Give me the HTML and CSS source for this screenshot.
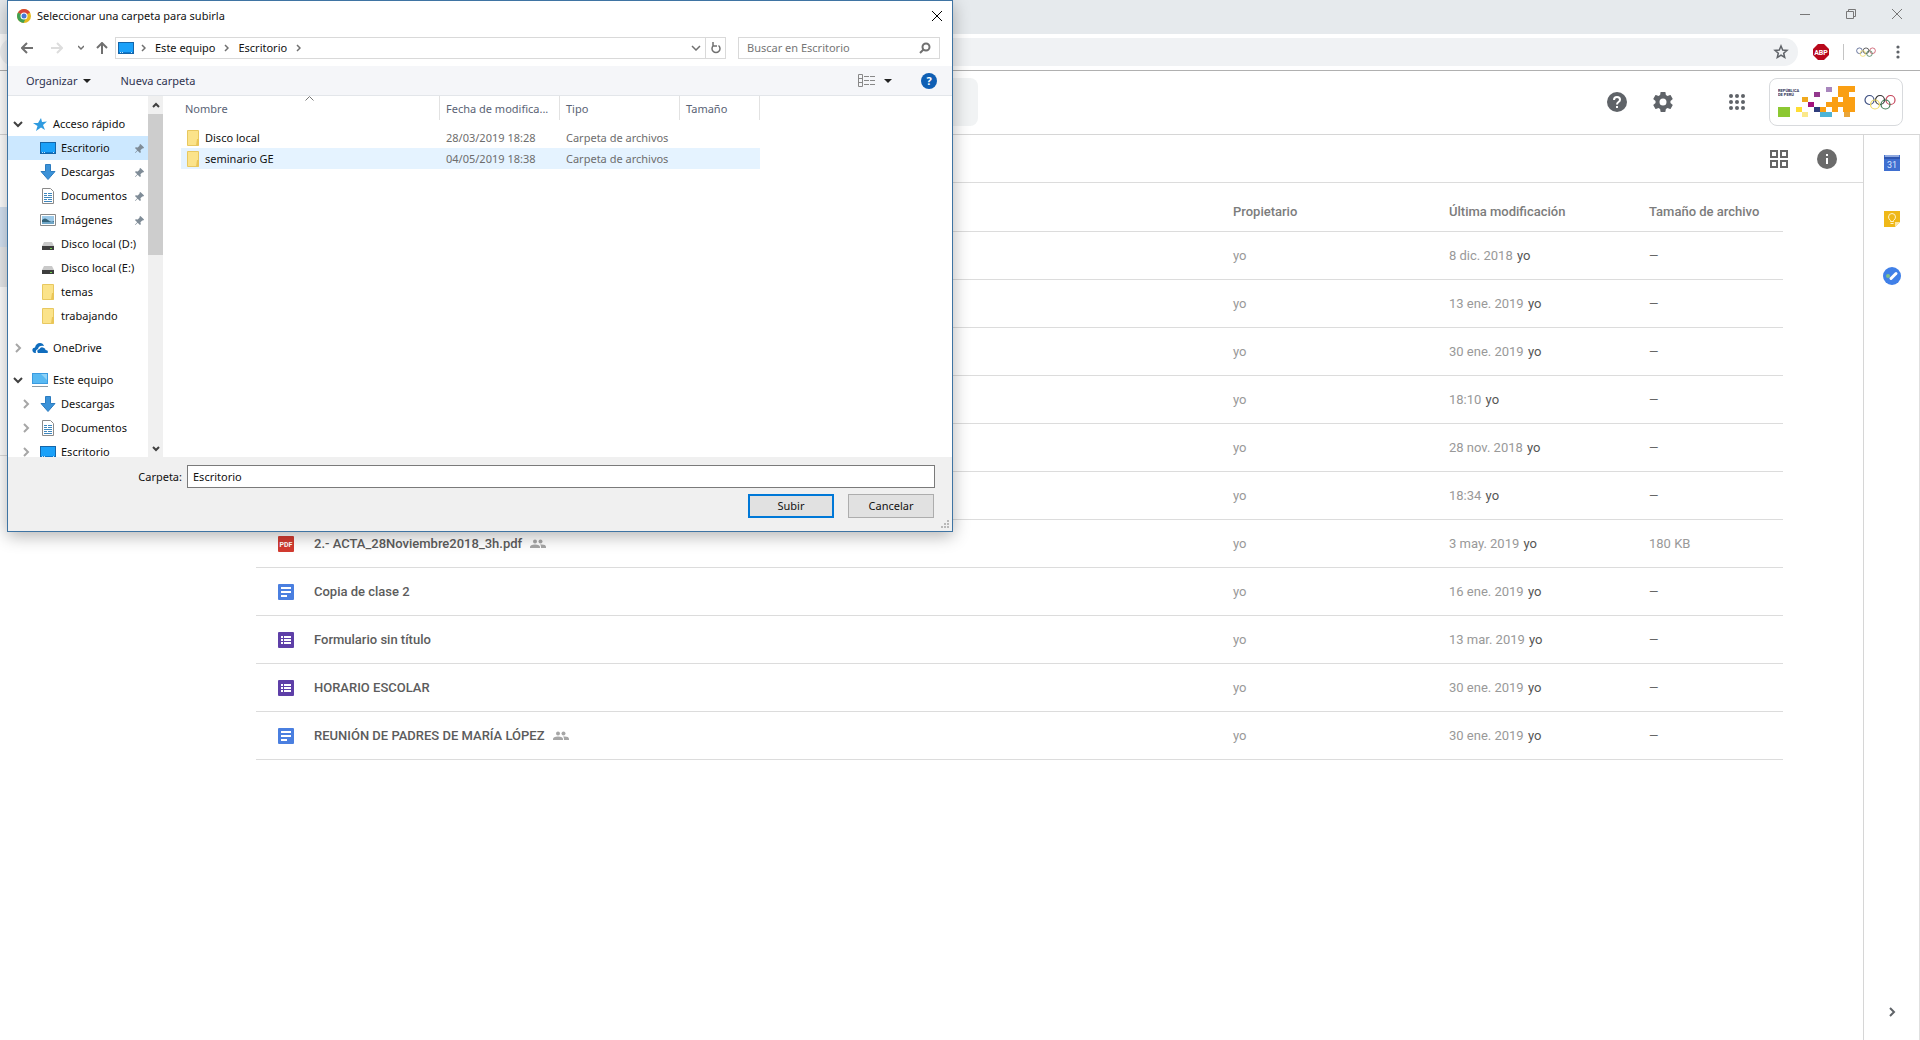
FILE: index.html
```html
<!DOCTYPE html>
<html lang="es">
  <head>
    <meta charset="utf-8" />
    <title>Mi unidad - Google Drive</title>
    <link rel="stylesheet" href="styles.css" />
  </head>
  <body>
    <!-- shared icons -->
    <svg class="sprite" aria-hidden="true">
      <symbol id="desktop" viewBox="0 0 16 16">
        <path fill="#1565a8" d="M0 2h16v12H0z" />
        <path fill="#1ba1f9" d="M1 3h14v9H1z" />
        <path fill="#0b79d0" d="M1 12h14v1H1z" />
        <path fill="#bfe4fb" d="M2 12h1v1H2zM4 12h1v1H4zM13 12h1v1h-1z" />
      </symbol>
      <symbol id="download" viewBox="0 0 16 16">
        <path fill="#3b92d8" stroke="#2c7cc0" d="M5.500.5h5v7h4.500L8 15.500 1 7.500h4.500z" />
      </symbol>
      <symbol id="doc" viewBox="0 0 16 16">
        <path fill="#fff" stroke="#8a8a8a" d="M2.500.5h8l3 3v12h-11z" />
        <path stroke="#3f87bd" d="M4 5.500h3M8 5.500h4M4 7.500h3M8 7.500h4M4 9.500h8M4 11.500h3M8 11.500h4M4 13.500h8" />
      </symbol>
      <symbol id="picture" viewBox="0 0 16 16">
        <path fill="#fff" stroke="#8a8a8a" d="M.5 2.500h15v11H.5z" />
        <path fill="#9cc9e8" d="M2 4h12v8H2z" />
        <path fill="#33637a" d="M2 8q3-3 6 0t6 1v3H2z" />
        <path fill="#6fa6c7" d="M2 10h12v2H2z" />
      </symbol>
      <symbol id="drive" viewBox="0 0 16 16">
        <path fill="#c9c9c9" d="M4 6h8l2 4H2z" />
        <path fill="#3d3d3d" d="M2 10h12v4H2z" />
        <path fill="#6fd04c" d="M10 12h2v1h-2z" />
      </symbol>
      <symbol id="folder" viewBox="0 0 16 16">
        <path fill="#fbe38a" stroke="#e8c860" d="M2.500.5h11v15h-11z" />
        <path fill="#e9c557" d="M12 9h2v6.500h-3z" />
      </symbol>
      <symbol id="star" viewBox="0 0 16 16">
        <path fill="#2f9be0" d="M9 2l1 4 5-.5-4 3.500 2 5-4-2.500L4 15l1.500-5L1 7h5z" />
      </symbol>
      <symbol id="cloud" viewBox="0 0 16 16">
        <path fill="#0f6cbd" d="M1 12Q-1 8 3 7.500 4 3 8 3q3 0 4 3-5-1-6 3-3 1-2 4H3q-1 0-2-1z" />
        <path fill="#0f6cbd" d="M6 13q-2-3 1.500-4Q9 6 12 8q1.500.5 1.500 2 2.500 0 2.500 2 0 1-1 1z" />
      </symbol>
      <symbol id="pc" viewBox="0 0 16 16">
        <path fill="#3a9be0" d="M0 1h16v11H0z" />
        <path fill="#58b9f2" d="M1 2h14v9H1z" />
        <path fill="#8fd3f8" d="M9 2h6v6z" />
        <path fill="#8c9aa3" d="M0 14h16v1H0z" />
      </symbol>
      <symbol id="pin" viewBox="0 0 12 12">
        <path fill="#7f8c97" d="M7 1l4 4-1 1H9L7 8l.5 2-1 1L4 8.500 1.500 11 1 10.500 3.500 8 1 5.500l1-1L4 5l2-2V2z" />
      </symbol>
      <symbol id="open" viewBox="0 0 10 10">
        <path fill="none" stroke="#404040" stroke-width="2" d="M1 3l4 4 4-4" />
      </symbol>
      <symbol id="closed" viewBox="0 0 10 10">
        <path fill="none" stroke="#a6a6a6" stroke-width="2" d="M3 1l4 4-4 4" />
      </symbol>
      <symbol id="people" viewBox="0 0 16 10">
        <circle cx="5" cy="2.500" r="2" />
        <circle cx="10.500" cy="2.500" r="2" />
        <path d="M0 9V8q0-2.500 5-2.500T10 8v1zM11 9V8q0-1.500-1-2.400 6-.5 6 2.400v1z" />
      </symbol>
      <symbol id="gdoc" viewBox="0 0 16 16">
        <rect width="16" height="16" rx="1" fill="#4a7fe0" />
        <path fill="#fff" d="M3 3h10v2H3zM3 7h10v2H3zM3 11h6v2H3z" />
      </symbol>
      <symbol id="gform" viewBox="0 0 16 16">
        <rect width="16" height="16" rx="1" fill="#5e3fa8" />
        <path fill="#fff" d="M3 4h2v2H3zM6 4h7v2H6zM3 7h2v2H3zM6 7h7v2H6zM3 10h2v2H3zM6 10h7v2H6z" />
      </symbol>
      <symbol id="rings" viewBox="0 0 32 16">
        <g fill="none" stroke-width="1.200">
          <circle cx="5.500" cy="6" r="4.500" stroke="#3d4f80" />
          <circle cx="16" cy="6" r="4.500" stroke="#333" />
          <circle cx="26.500" cy="6" r="4.500" stroke="#c5455a" />
          <circle cx="11" cy="10.500" r="4.500" stroke="#eedb62" />
          <circle cx="21.500" cy="10.500" r="4.500" stroke="#3d7a52" />
        </g>
      </symbol>
    </svg>

    <div class="browser">
      <div class="tabstrip">
        <button aria-label="Minimizar"><svg width="10" height="10"><path d="M0 5.500h10" /></svg></button>
        <button aria-label="Restaurar"><svg width="10" height="10"><path d="M.5 2.500h7v7h-7zM2.500 2.500v-2h7v7h-2" /></svg></button>
        <button aria-label="Cerrar ventana"><svg width="10" height="10"><path d="M0 0l10 10M10 0L0 10" /></svg></button>
      </div>

      <div class="toolbar">
        <div class="omnibox">
          <svg width="16" height="16" viewBox="0 0 16 16"><path fill="none" stroke="#5f6368" stroke-width="1.500" d="M8 2l1.700 4 4.300.4-3.300 2.800 1 4.300L8 11.200l-3.700 2.300 1-4.300L2 6.400 6.300 6z" /></svg>
        </div>
        <svg class="abp" width="16" height="16" viewBox="0 0 16 16">
          <path fill="#b8081b" d="M5 0h6l5 5v6l-5 5H5l-5-5V5z" />
          <text x="8" y="11" fill="#fff" font-family="Roboto" font-size="7" font-weight="700" text-anchor="middle">ABP</text>
        </svg>
        <span class="divider"></span>
        <svg class="profile" width="20" height="10"><use href="#rings" /></svg>
        <svg width="4" height="14" fill="#5f6368"><circle cx="2" cy="2" r="1.600" /><circle cx="2" cy="7" r="1.600" /><circle cx="2" cy="12" r="1.600" /></svg>
      </div>

      <header class="header">
        <div class="searchbox"></div>
        <button aria-label="Ayuda">
          <svg width="20" height="20" viewBox="0 0 20 20"><circle cx="10" cy="10" r="10" fill="#5f6368" /><path fill="none" stroke="#fff" stroke-width="2" d="M7 8q0-3 3-3t3 2.700q0 1.300-1.500 2.300T10 12.500" /><path fill="#fff" d="M9 14h2v2H9z" /></svg>
        </button>
        <button class="settings" aria-label="Configuración">
          <svg width="20" height="20" viewBox="2 2 20 20"><path fill="#5f6368" d="M19.430 12.980c.04-.32.07-.64.07-.98s-.03-.66-.07-.98l2.110-1.650c.19-.15.24-.42.12-.64l-2-3.460c-.12-.22-.39-.3-.61-.22l-2.490 1c-.52-.4-1.080-.73-1.690-.98l-.38-2.650C14.460 2.180 14.250 2 14 2h-4c-.25 0-.46.18-.49.42l-.38 2.650c-.61.25-1.170.59-1.690.98l-2.490-1c-.23-.09-.49 0-.61.22l-2 3.460c-.13.22-.07.49.12.64l2.110 1.650c-.04.32-.07.65-.07.98s.03.66.07.98l-2.110 1.650c-.19.15-.24.42-.12.64l2 3.460c.12.22.39.3.61.22l2.490-1c.52.4 1.080.73 1.690.98l.38 2.650c.03.24.24.42.49.42h4c.25 0 .46-.18.49-.42l.38-2.650c.61-.25 1.170-.59 1.690-.98l2.490 1c.23.09.49 0 .61-.22l2-3.460c.12-.22.07-.49-.12-.64l-2.110-1.650zM12 15.500a3.500 3.500 0 1 1 0-7 3.500 3.500 0 0 1 0 7z" /></svg>
        </button>
        <button class="apps" aria-label="Aplicaciones">
          <svg width="16" height="16" fill="#5f6368"><circle cx="2" cy="2" r="2" /><circle cx="8" cy="2" r="2" /><circle cx="14" cy="2" r="2" /><circle cx="2" cy="8" r="2" /><circle cx="8" cy="8" r="2" /><circle cx="14" cy="8" r="2" /><circle cx="2" cy="14" r="2" /><circle cx="8" cy="14" r="2" /><circle cx="14" cy="14" r="2" /></svg>
        </button>
        <button class="account" aria-label="Cuenta">
          <svg width="78" height="34" viewBox="0 0 78 34">
            <g font-family="Roboto" font-size="4" font-weight="700" fill="#2b2f55">
              <text x="0" y="7">REPÚBLICA</text>
              <text x="0" y="11">DE PERÚ</text>
            </g>
            <path fill="#8cc832" d="M0 22h12v10H0z" />
            <path fill="#fd3" d="M18 22h6v5h-6z" />
            <path fill="#fbe88a" d="M24 27h6v5h-6z" />
            <path fill="#f0a91e" d="M24 12h6v5h-6z" />
            <path fill="#a3117c" d="M30 17h6v5h-6z" />
            <path fill="#93388d" d="M36 7h6v5h-6z" />
            <path fill="#2f3d7c" d="M36 22h6v5h-6z" />
            <path fill="#a886bd" d="M48 2h6v5h-6z" />
            <path fill="#4db4d6" d="M42 27h12v5H42z" />
            <path fill="#e8a53a" d="M66 27h6v5h-6z" />
            <path fill="#fa9f13" fill-rule="evenodd" d="M60 1h17v6h-6v5h6v15h-12v-5h-5v5h-6v-5h-6v5h-6v-5h6v-5h6v-5h6V7h0zM60 12v5h5v-5z" />
          </svg>
          <svg width="32" height="16"><use href="#rings" /></svg>
        </button>
      </header>

      <div class="content">
        <nav class="leftnav">
          <div class="nav-item selected"></div>
          <div class="nav-item hovered"></div>
          <div class="storage"></div>
        </nav>
        <main>
          <div class="actions">
            <button aria-label="Vista de cuadrícula"><svg width="18" height="18" fill="none" stroke="#666" stroke-width="2"><path d="M1 1h6v6H1zM11 1h6v6h-6zM1 11h6v6H1zM11 11h6v6h-6z" /></svg></button>
            <button aria-label="Ver detalles"><svg width="20" height="20"><circle cx="10" cy="10" r="10" fill="#6b6b6b" /><path fill="#fff" d="M9 5h2v2H9zM9 9h2v6H9z" /></svg></button>
          </div>
          <table class="files">
            <thead>
              <tr><th class="name"></th><th class="owner">Propietario</th><th class="date">Última modificación</th><th class="size">Tamaño de archivo</th></tr>
            </thead>
            <tbody>
              <tr><td></td><td>yo</td><td>8 dic. 2018 <b>yo</b></td><td class="none">—</td></tr>
              <tr><td></td><td>yo</td><td>13 ene. 2019 <b>yo</b></td><td class="none">—</td></tr>
              <tr><td></td><td>yo</td><td>30 ene. 2019 <b>yo</b></td><td class="none">—</td></tr>
              <tr><td></td><td>yo</td><td>18:10 <b>yo</b></td><td class="none">—</td></tr>
              <tr><td></td><td>yo</td><td>28 nov. 2018 <b>yo</b></td><td class="none">—</td></tr>
              <tr><td></td><td>yo</td><td>18:34 <b>yo</b></td><td class="none">—</td></tr>
              <tr>
                <td>
                  <div class="file">
                    <svg width="16" height="16">
                      <rect width="16" height="16" rx="1" fill="#d33b30" />
                      <text x="8" y="11" fill="#fff" font-family="Roboto" font-size="7" font-weight="700" text-anchor="middle">PDF</text>
                    </svg>
                    <span>2.- ACTA_28Noviembre2018_3h.pdf</span>
                    <svg class="shared" width="16" height="10"><use href="#people" /></svg>
                  </div>
                </td>
                <td>yo</td><td>3 may. 2019 <b>yo</b></td><td>180 KB</td>
              </tr>
              <tr>
                <td><div class="file"><svg width="16" height="16"><use href="#gdoc" /></svg><span>Copia de clase 2</span></div></td>
                <td>yo</td><td>16 ene. 2019 <b>yo</b></td><td class="none">—</td>
              </tr>
              <tr>
                <td><div class="file"><svg width="16" height="16"><use href="#gform" /></svg><span>Formulario sin título</span></div></td>
                <td>yo</td><td>13 mar. 2019 <b>yo</b></td><td class="none">—</td>
              </tr>
              <tr>
                <td><div class="file"><svg width="16" height="16"><use href="#gform" /></svg><span>HORARIO ESCOLAR</span></div></td>
                <td>yo</td><td>30 ene. 2019 <b>yo</b></td><td class="none">—</td>
              </tr>
              <tr>
                <td><div class="file"><svg width="16" height="16"><use href="#gdoc" /></svg><span>REUNIÓN DE PADRES DE MARÍA LÓPEZ</span><svg class="shared" width="16" height="10"><use href="#people" /></svg></div></td>
                <td>yo</td><td>30 ene. 2019 <b>yo</b></td><td class="none">—</td>
              </tr>
            </tbody>
          </table>
        </main>
        <aside class="addons">
          <button aria-label="Calendar"><svg width="16" height="16"><path fill="#3f6fd0" d="M0 0h16v16H0z" /><path fill="#8fa9e0" d="M1 0h14v2H1z" /><path fill="#2f56b0" d="M0 2h16v2H0z" /><text x="8" y="13" fill="#dbe6ff" font-family="Roboto" font-size="9" text-anchor="middle">31</text></svg></button>
          <button aria-label="Keep"><svg width="16" height="16"><path fill="#efb818" d="M0 0h16v11l-5 5H0z" /><path fill="#fbe6a6" d="M11 16v-5h5z" /><path fill="none" stroke="#fff3cf" d="M6.500 10.500v-1q-2-1.500-2-3.500a3.500 3.500 0 0 1 7 0q0 2-2 3.500v1zM6.500 12.500h3" /></svg></button>
          <button aria-label="Tasks"><svg width="18" height="18"><circle cx="9" cy="9" r="9" fill="#4080e8" /><circle cx="5" cy="9" r="2" fill="#7fc08a" /><path stroke="#fff" stroke-width="3" stroke-linecap="round" d="M8 11.500l5-5" /></svg></button>
          <button class="collapse" aria-label="Ocultar panel lateral"><svg width="10" height="12" fill="none" stroke="#5f6368" stroke-width="2"><path d="M3 2l4 4-4 4" /></svg></button>
        </aside>
      </div>
    </div>

    <!-- folder picker -->
    <div class="dialog" role="dialog" aria-label="Seleccionar una carpeta para subirla">
      <div class="titlebar">
        <svg width="14" height="14" viewBox="0 0 14 14">
          <circle cx="7" cy="7" r="7" fill="#e5b91e" />
          <path fill="#d9453a" d="M7 7L1 3.500A7 7 0 0 1 13 3.500z" />
          <path fill="#3f9f55" d="M7 7L1 3.500A7 7 0 0 0 6.500 14L9 9z" />
          <circle cx="7" cy="7" r="3.500" fill="#fff" />
          <circle cx="7" cy="7" r="2.500" fill="#4678d8" />
        </svg>
        <span>Seleccionar una carpeta para subirla</span>
        <button class="close" aria-label="Cerrar"><svg width="10" height="10"><path stroke="#000" d="M0 0l10 10M10 0L0 10" /></svg></button>
      </div>

      <div class="navbar">
        <button aria-label="Atrás"><svg width="12" height="12"><path d="M12 6H1M6 1L1 6l5 5" /></svg></button>
        <button class="off" aria-label="Adelante"><svg width="12" height="12"><path d="M0 6h11M6 1l5 5-5 5" /></svg></button>
        <button class="recent" aria-label="Recientes"><svg width="6" height="6"><path d="M0 1l3 3 3-3" /></svg></button>
        <button class="up" aria-label="Subir un nivel"><svg width="12" height="12"><path d="M6 12V1M1 6l5-5 5 5" /></svg></button>
        <div class="address">
          <svg class="place" width="16" height="14" viewBox="0 1 16 14"><use href="#desktop" width="16" height="16" /></svg>
          <svg width="5" height="8"><path d="M1 1l3 3-3 3" /></svg>
          <button>Este equipo</button>
          <svg width="5" height="8"><path d="M1 1l3 3-3 3" /></svg>
          <button>Escritorio</button>
          <svg width="5" height="8"><path d="M1 1l3 3-3 3" /></svg>
          <button class="history" aria-label="Ubicaciones anteriores"><svg width="10" height="6"><path d="M1 1l4 4 4-4" /></svg></button>
          <button class="refresh" aria-label="Actualizar"><svg width="12" height="12"><path d="M8.500 3.500a4 4 0 1 1-5 0M3 0v4h4" /></svg></button>
        </div>
        <div class="search">
          <input type="text" placeholder="Buscar en Escritorio" aria-label="Buscar en Escritorio" />
          <svg width="12" height="12"><circle cx="7" cy="5" r="3.500" /><path d="M4.500 7.500L1 11" /></svg>
        </div>
      </div>

      <div class="commands">
        <button>Organizar <span class="caret"></span></button>
        <button>Nueva carpeta</button>
        <button class="view" aria-label="Cambiar la vista">
          <svg width="17" height="13" fill="none" stroke="#888"><path d="M.5.5h4v12h-4zM0 4.500h5M0 8.500h5M6 2.500h5M12 2.500h5M6 6.500h5M12 6.500h5M6 10.500h5M12 10.500h5" /></svg>
          <span class="caret"></span>
        </button>
        <button class="help" aria-label="Ayuda">?</button>
      </div>

      <div class="browse">
        <div class="tree">
          <ul>
            <li><svg class="arrow"><use href="#open" /></svg><svg class="icon"><use href="#star" /></svg>Acceso rápido</li>
            <li class="child current"><svg class="icon"><use href="#desktop" /></svg>Escritorio<svg class="pin"><use href="#pin" /></svg></li>
            <li class="child"><svg class="icon"><use href="#download" /></svg>Descargas<svg class="pin"><use href="#pin" /></svg></li>
            <li class="child"><svg class="icon"><use href="#doc" /></svg>Documentos<svg class="pin"><use href="#pin" /></svg></li>
            <li class="child"><svg class="icon"><use href="#picture" /></svg>Imágenes<svg class="pin"><use href="#pin" /></svg></li>
            <li class="child"><svg class="icon"><use href="#drive" /></svg>Disco local (D:)</li>
            <li class="child"><svg class="icon"><use href="#drive" /></svg>Disco local (E:)</li>
            <li class="child"><svg class="icon"><use href="#folder" /></svg>temas</li>
            <li class="child"><svg class="icon"><use href="#folder" /></svg>trabajando</li>
          </ul>
          <ul>
            <li><svg class="arrow"><use href="#closed" /></svg><svg class="icon"><use href="#cloud" /></svg>OneDrive</li>
          </ul>
          <ul>
            <li><svg class="arrow"><use href="#open" /></svg><svg class="icon"><use href="#pc" /></svg>Este equipo</li>
            <li class="nested"><svg class="arrow"><use href="#closed" /></svg><svg class="icon"><use href="#download" /></svg>Descargas</li>
            <li class="nested"><svg class="arrow"><use href="#closed" /></svg><svg class="icon"><use href="#doc" /></svg>Documentos</li>
            <li class="nested"><svg class="arrow"><use href="#closed" /></svg><svg class="icon"><use href="#desktop" /></svg>Escritorio</li>
          </ul>
        </div>
        <div class="scrollbar">
          <svg width="10" height="18"><path d="M2 11l3-3 3 3" /></svg>
          <div class="thumb"></div>
          <svg width="10" height="18"><path d="M2 8l3 3 3-3" /></svg>
        </div>
        <div class="listing">
          <svg class="sort" width="9" height="5"><path fill="none" stroke="#777" d="M.5 4.500l4-4 4 4" /></svg>
          <table>
            <thead>
              <tr><th class="col-name">Nombre</th><th class="col-date">Fecha de modifica...</th><th class="col-type">Tipo</th><th class="col-size">Tamaño</th></tr>
            </thead>
            <tbody>
              <tr><td><div class="folder"><svg width="16" height="16"><use href="#folder" /></svg>Disco local</div></td><td>28/03/2019 18:28</td><td>Carpeta de archivos</td><td></td></tr>
              <tr class="hot"><td><div class="folder"><svg width="16" height="16"><use href="#folder" /></svg>seminario GE</div></td><td>04/05/2019 18:38</td><td>Carpeta de archivos</td><td></td></tr>
            </tbody>
          </table>
        </div>
      </div>

      <div class="footer">
        <div class="field">
          <label for="folder">Carpeta:</label>
          <input id="folder" type="text" value="Escritorio" />
        </div>
        <div class="buttons">
          <button class="primary">Subir</button>
          <button>Cancelar</button>
        </div>
        <svg class="grip" width="9" height="9" fill="#b8b8b8"><path d="M6 0h2v2H6zM3 3h2v2H3zM6 3h2v2H6zM0 6h2v2H0zM3 6h2v2H3zM6 6h2v2H6z" /></svg>
      </div>
    </div>
  </body>
</html>
```

FILE: styles.css
```css
* {
  box-sizing: border-box;
}

body {
  margin: 0;
  background: #fff;
  font-family: "Roboto", sans-serif;
  font-size: 13px;
  color: #555;
}

button {
  display: flex;
  align-items: center;
  padding: 0;
  border: none;
  background: none;
  font: inherit;
  color: inherit;
}

svg {
  display: block;
  flex: none;
}

ul {
  list-style: none;
  margin: 0;
  padding: 0;
}

table {
  border-spacing: 0;
  table-layout: fixed;
}

th {
  text-align: left;
}

.sprite {
  display: none;
}

/* browser window */

.browser {
  display: flex;
  flex-direction: column;
  height: 100vh;
}

.tabstrip {
  display: flex;
  justify-content: flex-end;
  gap: 36px;
  height: 34px;
  padding: 0 18px 6px;
  background: #e6eaed;
}

.tabstrip path {
  fill: none;
  stroke: #777;
}

.toolbar {
  display: flex;
  align-items: center;
  height: 37px;
  padding: 0 20px 0 0;
  border-bottom: 1px solid #b0b0b0;
}

.omnibox {
  display: flex;
  flex: 1;
  align-items: center;
  justify-content: flex-end;
  height: 28px;
  padding-right: 9px;
  border-radius: 14px;
  background: #f0f2f4;
}

.abp {
  margin-left: 15px;
}

.divider {
  width: 1px;
  height: 16px;
  margin: 0 12px 0 14px;
  background: #c4c4c4;
}

.profile {
  margin-right: 20px;
}

.header {
  display: flex;
  align-items: center;
  height: 64px;
  padding: 0 17px 2px 0;
  border-bottom: 1px solid #d6d6d6;
}

.searchbox {
  width: 722px;
  height: 48px;
  margin: 0 auto 0 256px;
  border-radius: 8px;
  background: #f1f3f4;
}

.settings {
  margin-left: 26px;
}

.apps {
  margin: 0 24px 0 56px;
}

.account {
  gap: 8px;
  height: 48px;
  padding: 0 6px 0 8px;
  border: 1px solid #d8dadd;
  border-radius: 8px;
}

.content {
  display: flex;
  flex: 1;
}

.leftnav {
  width: 256px;
  padding-top: 72px;
}

.nav-item {
  height: 40px;
}

.nav-item.selected {
  background: #d5e3f3;
}

.nav-item.hovered {
  background: #e8eaec;
}

.storage {
  margin-top: 168px;
  border-top: 1px solid #ddd;
}

main {
  flex: 1;
}

.actions {
  display: flex;
  align-items: center;
  justify-content: flex-end;
  gap: 29px;
  height: 48px;
  padding-right: 26px;
  border-bottom: 1px solid #dcdcdc;
}

.files {
  width: calc(100% - 80px);
}

.files th,
.files td {
  height: 48px;
  padding: 0;
  border-bottom: 1px solid #dcdcdc;
}

.files th {
  height: 49px;
  padding-top: 9px;
  font-weight: 500;
  color: #7c7c7c;
}

.files td {
  color: #999;
}

.files b {
  margin-left: 1px;
  font-weight: 400;
  color: #555;
}

.files .none {
  font-size: 12px;
  color: #666;
}

.owner {
  width: 216px;
}

.date {
  width: 200px;
}

.size {
  width: 134px;
}

.file {
  display: flex;
  align-items: center;
  padding-left: 22px;
  font-weight: 500;
  color: #5c5c5c;
}

.file span {
  margin: 0 8px 0 20px;
}

.shared {
  fill: #a6a6a6;
}

.addons {
  display: flex;
  flex-direction: column;
  align-items: center;
  gap: 40px;
  width: 57px;
  padding: 20px 0 22px;
  border-left: 1px solid #d6d6d6;
  border-right: 1px solid #e0e0e0;
}

.collapse {
  margin-top: auto;
}

/* folder picker */

.dialog {
  position: absolute;
  top: 0;
  left: 7px;
  width: 946px;
  border: 1px solid #3f74a3;
  background: #fff;
  box-shadow: 0 4px 16px rgba(0, 0, 0, 0.3);
  font-family: "Noto Sans", sans-serif;
  font-size: 11px;
  line-height: 16px;
  color: #111;
}

.titlebar {
  display: flex;
  align-items: center;
  gap: 6px;
  height: 29px;
  padding: 0 10px 0 9px;
}

.close {
  margin-left: auto;
}

.navbar {
  display: flex;
  align-items: center;
  height: 36px;
  padding: 0 12px 0 13px;
}

.navbar path,
.navbar circle {
  fill: none;
  stroke: #707070;
  stroke-width: 2;
}

.navbar .off {
  margin-left: 18px;
}

.navbar .off path {
  stroke: #ddd;
}

.navbar .recent {
  margin: 0 12px 0 15px;
}

.navbar .recent path,
.address path {
  stroke-width: 1.5;
}

.address {
  display: flex;
  flex: 1;
  align-items: center;
  height: 22px;
  margin: 0 12px 0 7px;
  padding-left: 2px;
  border: 1px solid #d9d9d9;
}

.address button {
  margin: 0 9px;
}

.address .place {
  margin-right: 7px;
}

.address .history {
  margin: 0 4px 0 auto;
}

.address .refresh {
  height: 100%;
  margin: 0;
  padding: 0 3px 0 4px;
  border-left: 1px solid #d9d9d9;
}

.search {
  display: flex;
  align-items: center;
  width: 202px;
  height: 22px;
  padding: 0 8px;
  border: 1px solid #d9d9d9;
}

.search input {
  flex: 1;
  min-width: 0;
  padding: 0;
  border: none;
  font: inherit;
}

.search input::placeholder {
  color: #767676;
}

.commands {
  display: flex;
  align-items: center;
  height: 30px;
  padding: 0 15px 0 18px;
  border-bottom: 1px solid #e3e6ea;
  background: #f5f6f9;
  color: #2f3350;
}

.commands button {
  margin-right: 29px;
}

.caret {
  margin-left: 6px;
  border: 4px solid transparent;
  border-top-color: #222;
  border-bottom: none;
}

.commands .view {
  margin: 0 29px 0 auto;
}

.view .caret {
  margin-left: 9px;
}

.commands .help {
  justify-content: center;
  width: 16px;
  height: 16px;
  margin: 0;
  border-radius: 50%;
  background: #0f5fb4;
  color: #fff;
  font-weight: 700;
}

.browse {
  display: flex;
  height: 361px;
}

.tree {
  width: 140px;
  padding-top: 16px;
  overflow: hidden;
}

.tree ul {
  margin-bottom: 8px;
}

.tree li {
  display: flex;
  align-items: center;
  height: 24px;
  padding-left: 5px;
  white-space: nowrap;
}

.tree .child {
  padding-left: 32px;
}

.tree .nested {
  padding-left: 13px;
}

.tree .current {
  background: #cce8ff;
}

.arrow {
  width: 10px;
  height: 10px;
  margin-right: 9px;
}

.icon {
  width: 16px;
  height: 16px;
  margin-right: 5px;
}

.pin {
  width: 11px;
  height: 11px;
  margin: 0 3px 0 auto;
}

.scrollbar {
  display: flex;
  flex-direction: column;
  align-items: center;
  width: 15px;
  background: #f0f0f0;
}

.scrollbar path {
  fill: none;
  stroke: #404040;
  stroke-width: 2;
}

.thumb {
  width: 100%;
  height: 141px;
  margin-bottom: auto;
  background: #cdcdcd;
}

.listing {
  position: relative;
  flex: 1;
  padding-left: 18px;
}

.sort {
  position: absolute;
  top: 0;
  left: 142px;
}

.listing table {
  width: 579px;
}

.listing th {
  height: 24px;
  padding: 2px 0 0 6px;
  border-right: 1px solid #e2e2e2;
  font-weight: 400;
  color: #5a6375;
  white-space: nowrap;
}

.listing td {
  height: 21px;
  padding: 0 0 0 6px;
  color: #6d6d6d;
}

.listing .col-name,
.listing td:first-child {
  padding-left: 4px;
}

.listing tbody::before {
  display: block;
  height: 7px;
  content: "";
}

.listing .hot {
  background: #e5f3ff;
}

.col-date,
.col-type {
  width: 120px;
}

.col-size {
  width: 80px;
}

.folder {
  display: flex;
  align-items: center;
  gap: 4px;
  color: #111;
}

.footer {
  position: relative;
  padding: 8px 17px 13px 0;
  background: #f0f0f0;
}

.field {
  display: flex;
  align-items: center;
}

.field label {
  width: 174px;
  margin-right: 5px;
  text-align: right;
}

.field input {
  flex: 1;
  height: 23px;
  padding: 0 5px;
  border: 1px solid #7a7a7a;
  font: inherit;
  color: inherit;
}

.buttons {
  display: flex;
  justify-content: flex-end;
  gap: 14px;
  margin-top: 6px;
  padding-right: 1px;
}

.buttons button {
  justify-content: center;
  width: 86px;
  height: 24px;
  border: 1px solid #adadad;
  background: #e1e1e1;
}

.buttons .primary {
  border: 2px solid #0078d7;
}

.grip {
  position: absolute;
  right: 2px;
  bottom: 2px;
}
```
